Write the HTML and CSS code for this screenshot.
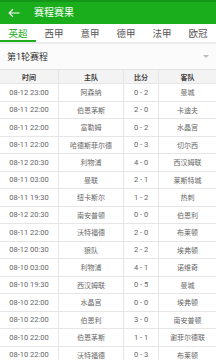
FILE: index.html
```html
<!DOCTYPE html>
<html>
<head>
<meta charset="utf-8">
<link rel="stylesheet" href="styles.css">
</head>
<body>
<div class="topbar">
  <svg class="back" width="12" height="10" viewBox="0 0 12 10"><path d="M11.5 5H1.2M5 1.2L1.2 5L5 8.8" fill="none" stroke="#fff" stroke-width="1.2"/></svg>
  <span class="title">赛程赛果</span>
</div>
<div class="tabs">
  <div class="tab active">英超</div>
  <div class="tab">西甲</div>
  <div class="tab">意甲</div>
  <div class="tab">德甲</div>
  <div class="tab">法甲</div>
  <div class="tab">欧冠</div>
</div>
<div class="round">
  <span>第1轮赛程</span>
  <span class="tri"></span>
</div>
<div class="table">
  <div class="row head"><div>时间</div><div>主队</div><div>比分</div><div>客队</div></div>
  <div class="row"><div class="t">08-12 23:00</div><div>阿森纳</div><div class="t">0 - 2</div><div>曼城</div></div>
  <div class="row"><div class="t">08-11 22:00</div><div>伯恩茅斯</div><div class="t">2 - 0</div><div>卡迪夫</div></div>
  <div class="row"><div class="t">08-11 22:00</div><div>富勒姆</div><div class="t">0 - 2</div><div>水晶宫</div></div>
  <div class="row"><div class="t">08-11 22:00</div><div>哈德斯菲尔德</div><div class="t">0 - 3</div><div>切尔西</div></div>
  <div class="row"><div class="t">08-12 20:30</div><div>利物浦</div><div class="t">4 - 0</div><div>西汉姆联</div></div>
  <div class="row"><div class="t">08-11 03:00</div><div>曼联</div><div class="t">2 - 1</div><div>莱斯特城</div></div>
  <div class="row"><div class="t">08-11 19:30</div><div>纽卡斯尔</div><div class="t">1 - 2</div><div>热刺</div></div>
  <div class="row"><div class="t">08-12 20:30</div><div>南安普顿</div><div class="t">0 - 0</div><div>伯恩利</div></div>
  <div class="row"><div class="t">08-11 22:00</div><div>沃特福德</div><div class="t">2 - 0</div><div>布莱顿</div></div>
  <div class="row"><div class="t">08-12 00:30</div><div>狼队</div><div class="t">2 - 2</div><div>埃弗顿</div></div>
  <div class="row"><div class="t">08-10 03:00</div><div>利物浦</div><div class="t">4 - 1</div><div>诺维奇</div></div>
  <div class="row"><div class="t">08-10 19:30</div><div>西汉姆联</div><div class="t">0 - 5</div><div>曼城</div></div>
  <div class="row"><div class="t">08-10 22:00</div><div>水晶宫</div><div class="t">0 - 0</div><div>埃弗顿</div></div>
  <div class="row"><div class="t">08-10 22:00</div><div>伯恩利</div><div class="t">3 - 0</div><div>南安普顿</div></div>
  <div class="row"><div class="t">08-10 22:00</div><div>伯恩茅斯</div><div class="t">1 - 1</div><div>谢菲尔德联</div></div>
  <div class="row"><div class="t">08-10 22:00</div><div>沃特福德</div><div class="t">0 - 3</div><div>布莱顿</div></div>
</div>
</body>
</html>
```
FILE: styles.css
```css
* { box-sizing: border-box; }
html, body { margin: 0; padding: 0; }
body {
  width: 216px;
  height: 360px;
  overflow: hidden;
  background: #fff;
  font-family: Roboto, "Noto Sans CJK SC", sans-serif;
  color: #555;
}
.topbar {
  height: 24px;
  background: #1aae1c;
  border-top: 2px solid #15961a;
  display: flex;
  align-items: center;
  padding-left: 8px;
}
.back { display: block; }
.title {
  margin-left: 14px;
  color: #fff;
  font-size: 10px;
  line-height: 1;
}
.tabs {
  display: grid;
  grid-template-columns: repeat(6, 1fr);
  height: 18px;
  background: #fff;
}
.tab {
  display: flex;
  align-items: center;
  justify-content: center;
  font-size: 9.5px;
  color: #555;
  border-bottom: 2px solid transparent;
  padding-top: 1px;
}
.tab.active {
  color: #1aae1c;
  border-bottom-color: #1aae1c;
}
.round {
  height: 27px;
  background: #fbfbfb;
  border-top: 2px solid #ececec;
  display: flex;
  align-items: center;
  justify-content: space-between;
  padding: 0 6px 0 7px;
  font-size: 9px;
  color: #333;
}
.tri {
  width: 0;
  height: 0;
  border-left: 3.5px solid transparent;
  border-right: 3.5px solid transparent;
  border-top: 3.5px solid #bbb;
  margin-right: 1px;
}
.table { border-top: 1px solid #e2e2e2; }
.row {
  display: grid;
  grid-template-columns: 59px 65px 35px 1fr;
  height: 17.5px;
  border-bottom: 1px solid #e6e6e6;
  font-size: 7px;
  color: #666;
}
.row > div {
  display: flex;
  align-items: center;
  justify-content: center;
  border-right: 1px solid #e6e6e6;
  white-space: nowrap;
}
.row > div.t { font-size: 7.5px; }
.row > div:last-child { border-right: none; }
.row.head {
  height: 14px;
  background: #f3f3f3;
  font-weight: bold;
  color: #444;
}
```
